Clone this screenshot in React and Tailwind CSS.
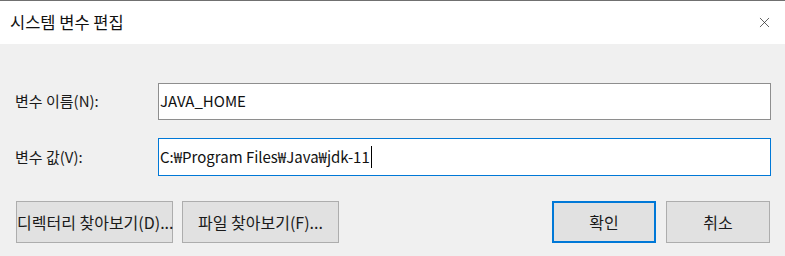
import { X } from "lucide-react";

const font = { fontFamily: '"Noto Sans CJK KR", "Noto Sans", sans-serif' };

const Btn = ({ children, primary, className = "" }) => (
  <button
    className={`h-[42px] bg-[#e1e1e1] text-[16px] text-[#1a1a1a] whitespace-nowrap ${
      primary ? "border-2 border-[#0078d7]" : "border border-[#adadad]"
    } ${className}`}
  >
    {children}
  </button>
);

export default function App() {
  return (
    <div
      className="w-[785px] h-[256px] flex flex-col border-t border-[#707070] overflow-hidden"
      style={font}
    >
      {/* title bar */}
      <div className="h-[43px] bg-white flex items-center justify-between pl-[10px] pr-[12px]">
        <span className="text-[16.5px] text-[#111]">시스템 변수 편집</span>
        <X size={17} strokeWidth={1} className="text-[#222]" />
      </div>

      {/* body */}
      <div className="flex-1 bg-[#f0f0f0] pt-[39px] pl-[15px] pr-[14px]">
        <div className="flex items-center">
          <span className="w-[143px] text-[15px] text-[#1a1a1a]">변수 이름(N):</span>
          <div className="flex-1 h-[37px] bg-white border border-[#8e8e8e] flex items-center px-px text-[15px] text-[#111]">
            JAVA_HOME
          </div>
        </div>
        <div className="flex items-center mt-[18px]">
          <span className="w-[143px] text-[15px] text-[#1a1a1a]">변수 값(V):</span>
          <div className="flex-1 h-[38px] bg-white border border-[#0078d7] flex items-center px-px text-[15px] text-[#111]">
            C:₩Program Files₩Java₩jdk-11
            <span className="inline-block w-px h-[22px] bg-black ml-[1px]" />
          </div>
        </div>
        <div className="flex items-center mt-[25px] pl-px pr-px">
          <Btn className="w-[157px]">디렉터리 찾아보기(D)...</Btn>
          <Btn className="w-[157px] ml-[9px]">파일 찾아보기(F)...</Btn>
          <div className="flex-1" />
          <Btn primary className="w-[104px]">확인</Btn>
          <Btn className="w-[104px] ml-[10px]">취소</Btn>
        </div>
      </div>
    </div>
  );
}
